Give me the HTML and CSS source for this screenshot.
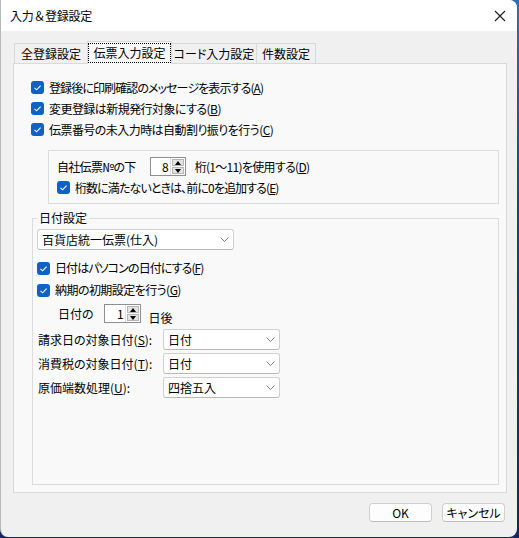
FILE: index.html
```html
<!DOCTYPE html>
<html lang="ja">
<head>
<meta charset="utf-8">
<title>入力＆登録設定</title>
<link rel="stylesheet" href="styles.css">
</head>
<body>
<div class="window">
  <div class="titlebar">
    <span class="title">入力＆登録設定</span>
    <svg class="close" width="12" height="12" viewBox="0 0 12 12"><path d="M1 1L11 11M11 1L1 11" stroke="#1a1a1a" stroke-width="1.1" fill="none"/></svg>
  </div>
  <div class="body">
    <div class="tabs">
      <div class="tab t1">全登録設定</div>
      <div class="tab t2 active"><span class="focus">伝票入力設定</span></div>
      <div class="tab t3">コード入力設定</div>
      <div class="tab t4">件数設定</div>
    </div>
    <div class="panel">
      <div class="chk-row tight"><span class="cb"><svg viewBox="0 0 13 13"><path d="M3.5 6.8L5.6 8.8L9.6 4.6" stroke="#fff" stroke-width="1.1" fill="none"/></svg></span>登録後に印刷確認のメッセージを表示する(<u>A</u>)</div>
      <div class="chk-row"><span class="cb"><svg viewBox="0 0 13 13"><path d="M3.5 6.8L5.6 8.8L9.6 4.6" stroke="#fff" stroke-width="1.1" fill="none"/></svg></span>変更登録は新規発行対象にする(<u>B</u>)</div>
      <div class="chk-row"><span class="cb"><svg viewBox="0 0 13 13"><path d="M3.5 6.8L5.6 8.8L9.6 4.6" stroke="#fff" stroke-width="1.1" fill="none"/></svg></span>伝票番号の未入力時は自動割り振りを行う(<u>C</u>)</div>

      <div class="group">
        <div class="digit-row">
          <span>自社伝票№の下</span>
          <span class="spin s1"><span class="val">8</span><span class="arrows"><span class="up"></span><span class="dn"></span></span></span>
          <span class="after">桁(1～11)を使用する(<u>D</u>)</span>
        </div>
        <div class="chk-row tight"><span class="cb"><svg viewBox="0 0 13 13"><path d="M3.5 6.8L5.6 8.8L9.6 4.6" stroke="#fff" stroke-width="1.1" fill="none"/></svg></span>桁数に満たないときは、前に0を追加する(<u>E</u>)</div>
      </div>

      <fieldset class="dates">
        <legend>日付設定</legend>
        <div class="select wide"><span>百貨店統一伝票(仕入)</span><svg class="chev" width="9" height="5" viewBox="0 0 9 5"><path d="M0.5 0.5L4.5 4.5L8.5 0.5" stroke="#707070" stroke-width="0.9" fill="none"/></svg></div>
        <div class="chk-row r22 first tight"><span class="cb"><svg viewBox="0 0 13 13"><path d="M3.5 6.8L5.6 8.8L9.6 4.6" stroke="#fff" stroke-width="1.1" fill="none"/></svg></span>日付はパソコンの日付にする(<u>F</u>)</div>
        <div class="chk-row r22"><span class="cb"><svg viewBox="0 0 13 13"><path d="M3.5 6.8L5.6 8.8L9.6 4.6" stroke="#fff" stroke-width="1.1" fill="none"/></svg></span>納期の初期設定を行う(<u>G</u>)</div>
        <div class="days-row">
          <span>日付の</span>
          <span class="spin s2"><span class="val">1</span><span class="arrows"><span class="up"></span><span class="dn"></span></span></span>
          <span class="days-after">日後</span>
        </div>
        <div class="form-row first"><span class="lbl">請求日の対象日付(<u>S</u>):</span><div class="select"><span>日付</span><svg class="chev" width="9" height="5" viewBox="0 0 9 5"><path d="M0.5 0.5L4.5 4.5L8.5 0.5" stroke="#707070" stroke-width="0.9" fill="none"/></svg></div></div>
        <div class="form-row"><span class="lbl">消費税の対象日付(<u>T</u>):</span><div class="select"><span>日付</span><svg class="chev" width="9" height="5" viewBox="0 0 9 5"><path d="M0.5 0.5L4.5 4.5L8.5 0.5" stroke="#707070" stroke-width="0.9" fill="none"/></svg></div></div>
        <div class="form-row"><span class="lbl">原価端数処理(<u>U</u>):</span><div class="select"><span>四捨五入</span><svg class="chev" width="9" height="5" viewBox="0 0 9 5"><path d="M0.5 0.5L4.5 4.5L8.5 0.5" stroke="#707070" stroke-width="0.9" fill="none"/></svg></div></div>
      </fieldset>
    </div>
    <div class="buttons">
      <button class="btn">OK</button>
      <button class="btn">キャンセル</button>
    </div>
  </div>
</div>
</body>
</html>
```
FILE: styles.css
```css
html, body {
  margin: 0;
  padding: 0;
}
body {
  width: 519px;
  height: 538px;
  overflow: hidden;
  background: linear-gradient(180deg, #2f6db8 0%, #1c3f86 40%, #14285f 100%);
  font-family: "Noto Sans CJK JP", "Noto Sans", sans-serif;
  font-size: 12px;
  font-feature-settings: "palt";
  color: #000;
}
.window {
  width: 517px;
  height: 537px;
  box-sizing: border-box;
  background: #f0f0f0;
  border-radius: 0 8px 8px 8px;
  overflow: hidden;
  border-left: 1px solid #b8b8b8;
  display: flex;
  flex-direction: column;
}
.titlebar {
  height: 31px;
  flex: none;
  background: #fff;
  display: flex;
  align-items: center;
  justify-content: space-between;
  padding: 0 11px 0 9px;
}
.title {
  line-height: 16px;
  font-feature-settings: normal;
  letter-spacing: -0.3px;
}
.close {
  display: block;
}
.body {
  flex: 1;
  padding: 10px 0 0 12px;
  display: flex;
  flex-direction: column;
}
.tabs {
  display: flex;
  align-items: flex-end;
  height: 22px;
  margin-left: 1px;
  position: relative;
  z-index: 1;
}
.tab {
  height: 20px;
  box-sizing: border-box;
  display: flex;
  align-items: center;
  justify-content: center;
  border: 1px solid #d9d9d9;
  border-bottom: none;
  background: #f0f0f0;
  line-height: 16px;
}
.t1 { width: 73px; border-right: none; }
.t2 { width: 85px; }
.t3 { width: 85px; border-left: none; }
.t4 { width: 59px; border-left: none; }
.tab.active {
  height: 23px;
  margin-bottom: -1px;
  background: #f9f9f9;
  padding-bottom: 1px;
}
.focus {
  border: 1px dotted #000;
  padding: 1px 2px;
  width: 83px;
  box-sizing: border-box;
  text-align: center;
}
.panel {
  width: 494px;
  height: 430px;
  box-sizing: border-box;
  border: 1px solid #d9d9d9;
  background: #f9f9f9;
  padding: 13px 0 0 17px;
}
.chk-row {
  height: 21px;
  display: flex;
  align-items: center;
  line-height: 16px;
  white-space: nowrap;
  letter-spacing: -0.55px;
}
.chk-row.tight {
  letter-spacing: -0.9px;
}
.chk-row.r22 {
  height: 22px;
}
.cb {
  width: 13px;
  height: 13px;
  border-radius: 3px;
  background: #0f62c4;
  margin-right: 5px;
  flex: none;
  display: block;
}
.cb svg {
  display: block;
  width: 13px;
  height: 13px;
}
u {
  text-decoration: underline;
  text-underline-offset: 1px;
}
.group {
  margin: 10px 0 0 17px;
  width: 451px;
  height: 54px;
  box-sizing: border-box;
  border: 1px solid #dcdcdc;
  padding: 5px 0 0 8px;
}
.digit-row {
  height: 21px;
  display: flex;
  align-items: center;
  line-height: 16px;
  white-space: nowrap;
  letter-spacing: -0.7px;
}
.spin {
  display: flex;
  height: 19px;
  box-sizing: border-box;
  border: 1px solid #8f8f8f;
  background: #fff;
  align-items: stretch;
  letter-spacing: 0;
}
.s1 {
  width: 36px;
  margin-left: 14px;
}
.s2 {
  width: 37px;
  margin-left: 10px;
}
.spin .val {
  flex: 1;
  text-align: right;
  line-height: 17px;
  padding-right: 1px;
}
.arrows {
  width: 15px;
  display: flex;
  flex-direction: column;
  border-left: 1px solid #e0e0e0;
  padding: 1px;
  box-sizing: border-box;
  gap: 1px;
}
.arrows span {
  flex: 1;
  background: #e3e3e3;
  border: 1px solid #b5b5b5;
  position: relative;
}
.arrows .up::after,
.arrows .dn::after {
  content: "";
  position: absolute;
  left: 50%;
  top: 50%;
  width: 0;
  height: 0;
  border-left: 3.5px solid transparent;
  border-right: 3.5px solid transparent;
  transform: translate(-50%, -50%);
}
.arrows .up::after { border-bottom: 4px solid #000; }
.arrows .dn::after { border-top: 4px solid #000; }
.after {
  margin-left: 9px;
}
.dates {
  margin: 6px 0 0 1px;
  width: 467px;
  height: 275px;
  box-sizing: border-box;
  border: 1px solid #dcdcdc;
  padding: 0 4px;
  min-width: 0;
}
.dates legend {
  padding: 0 2px;
  line-height: 16px;
}
.select {
  height: 21px;
  box-sizing: border-box;
  border: 1px solid #d0d0d0;
  border-bottom-color: #b8b8b8;
  border-radius: 3px;
  background: #fff;
  display: flex;
  align-items: center;
  justify-content: space-between;
  padding: 0 4px 0 4px;
  line-height: 16px;
  width: 117px;
}
.select.wide {
  width: 197px;
  margin-top: 3px;
}
.chev {
  display: block;
}
.chk-row.first {
  margin-top: 7px;
}
.days-row {
  margin-top: 2px;
  height: 21px;
  display: flex;
  align-items: center;
  padding-left: 21px;
  line-height: 16px;
}
.days-after {
  margin-left: 8px;
  align-self: flex-end;
  position: relative;
  top: 2px;
}
.form-row {
  display: flex;
  align-items: center;
  height: 21px;
  margin-top: 3px;
  padding-left: 1px;
  line-height: 16px;
}
.form-row.first {
  margin-top: 5px;
}
.lbl {
  width: 125px;
  flex: none;
  white-space: nowrap;
}
.buttons {
  display: flex;
  justify-content: flex-end;
  gap: 10px;
  margin-top: 10px;
  padding-right: 12px;
}
.btn {
  width: 63px;
  height: 19px;
  box-sizing: border-box;
  border: 1px solid #d0d0d0;
  border-bottom-color: #bdbdbd;
  border-radius: 4px;
  background: #fdfdfd;
  font-family: "Noto Sans CJK JP", "Noto Sans", sans-serif;
  font-size: 12px;
  font-feature-settings: "palt";
  line-height: 15px;
  padding: 0;
  color: #000;
}
```
